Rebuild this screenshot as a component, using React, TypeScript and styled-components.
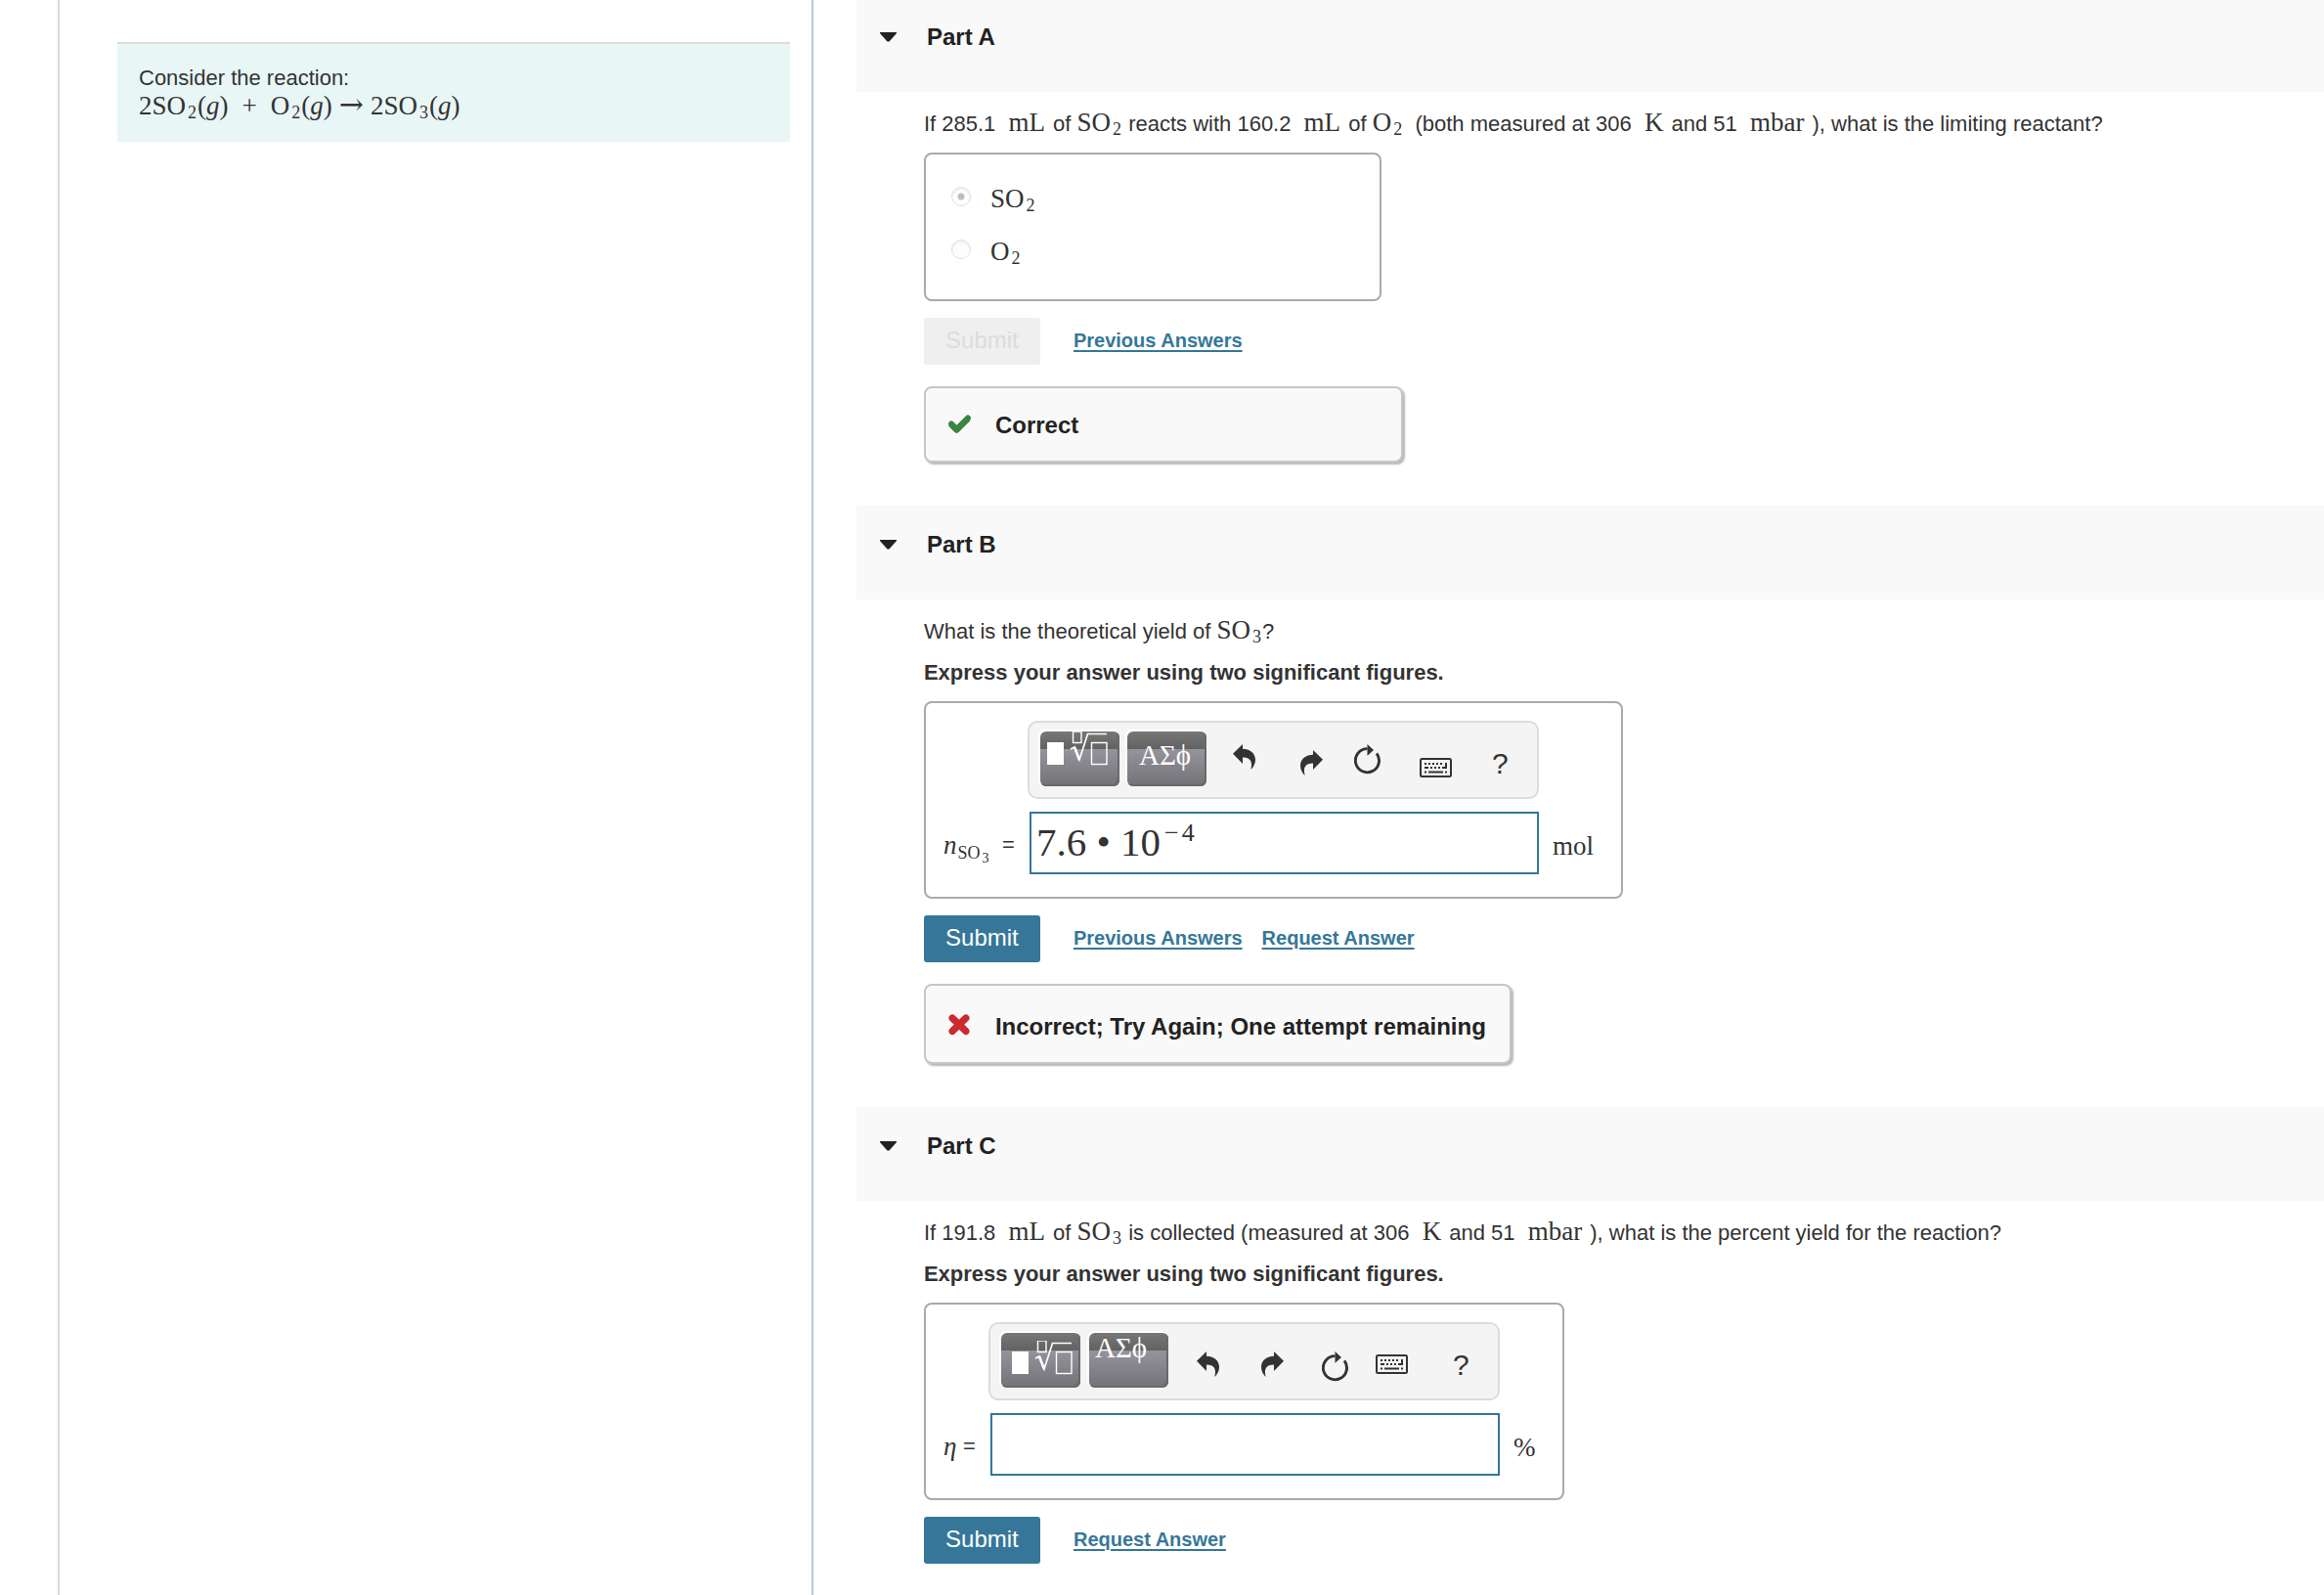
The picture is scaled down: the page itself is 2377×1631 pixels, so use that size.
import React, { useState } from "react";
import styled, { createGlobalStyle } from "styled-components";

const sans = `"Liberation Sans", Arial, Helvetica, sans-serif`;
const serif = `"Liberation Serif", "Times New Roman", Times, serif`;

const GlobalStyle = createGlobalStyle`
  *, *::before, *::after { box-sizing: border-box; }
  body { margin: 0; background: #fff; color: #333; font-family: ${sans}; font-size: 22px; line-height: 30px; }
`;

/* ---------- page frame ---------- */

const Page = styled.div`
  display: grid;
  grid-template-columns: 35% 1fr;
  height: 100vh;
  overflow: hidden;
`;

const Sidebar = styled.aside`
  margin-left: 59px;
  padding: 43px 22px 0 59px;
  border-left: 2px solid #d8d8d8;
  border-right: 2px solid #b8c7da;
`;

const Prompt = styled.section`
  padding: 20px 22px;
  border-top: 2px solid #dcdcdc;
  background: #e8f6f6;
`;

const PromptLine = styled.p`
  margin: 0;
`;

const Main = styled.main`
  min-width: 0;
  margin-top: -2px;
  padding-left: 44px;
`;

/* ---------- a part of the problem ---------- */

const PartSection = styled.section`
  padding-bottom: 44px;
`;

const PartHeader = styled.header`
  height: 96px;
  padding: 26px 24px;
  background: #f9f9f9;
`;

const PartTitle = styled.h2`
  margin: 0;
  font-size: 24px;
  line-height: 28px;
`;

const Toggle = styled.button`
  display: flex;
  align-items: center;
  gap: 31px;
  padding: 0;
  border: 0;
  background: none;
  color: #222;
  font: inherit;
  cursor: pointer;
`;

const Body = styled.form`
  padding: 18px 24px 0 69px;
`;

const Question = styled.p`
  margin: 0;
`;

const Instruction = styled.p`
  margin: 12px 0 0;
  font-weight: bold;
`;

const Formula = styled.span`
  font-family: ${serif};
  font-size: 27px;
  line-height: 0;
`;

const Unit = styled(Formula)`
  margin: 0 2px 0 7px;
`;

const Sub = styled.sub`
  margin: 0 1px 0 2px;
  font-size: 18px;
  line-height: 0;
  vertical-align: -4px;
`;

const Operator = styled.span`
  margin: 0 14px;
`;

const Arrow = styled.span`
  margin: 0 7px;
  font-family: "DejaVu Serif", serif;
  font-size: 30px;
`;

/* ---------- multiple choice ---------- */

const Choices = styled.fieldset`
  display: flex;
  flex-direction: column;
  gap: 24px;
  width: 468px;
  height: 152px;
  margin: 14px 0 0;
  padding: 28px 26px;
  border: 2px solid #aaa;
  border-radius: 8px;
`;

const Choice = styled.label`
  display: flex;
  align-items: center;
  gap: 20px;
`;

const Radio = styled.input`
  appearance: none;
  width: 20px;
  height: 20px;
  margin: 0;
  border: 1px solid #e0e0e0;
  border-radius: 50%;
  background: #fdfdfd;
  box-shadow: inset 0 2px 2px #f0f0f0;

  &:checked {
    background: radial-gradient(circle, #bdbdbd 0 3px, #fdfdfd 4px);
  }
`;

const ChoiceText = styled(Formula)`
  line-height: 30px;
  padding-top: 2px;
  margin-bottom: -2px;
`;

/* ---------- submit row and feedback ---------- */

const Actions = styled.div`
  display: flex;
  align-items: center;
  margin-top: 17px;
`;

const Submit = styled.button`
  height: 48px;
  width: 119px;
  margin-right: 34px;
  padding: 0 0 2px;
  border: 0;
  border-radius: 3px;
  background: #367799;
  color: #fff;
  font: 24px/28px ${sans};

  &:disabled {
    background: #efefef;
    color: #dcdcdc;
  }
`;

const ActionLink = styled.a`
  margin-right: 20px;
  padding-bottom: 2px;
  color: #367799;
  font-size: 20px;
  line-height: 28px;
  font-weight: bold;
  text-underline-offset: 3px;
`;

const Feedback = styled.div<{ $wide?: boolean }>`
  display: flex;
  gap: 24px;
  width: fit-content;
  min-width: 490px;
  margin-top: 22px;
  padding: ${(p) => (p.$wide ? 28 : 24)}px 24px 22px 22px;
  border: 2px solid #c6c6c6;
  border-radius: 8px;
  background: #f9f9f9;
  box-shadow: 2px 2px 2px #b8b8b8;
  color: #222;
  font-size: 24px;
  line-height: 28px;
  font-weight: bold;
`;

/* ---------- equation answer ---------- */

const AnswerBox = styled.div<{ $label: number }>`
  display: grid;
  grid-template-columns: ${(p) => p.$label}px 523px auto;
  row-gap: 13px;
  width: fit-content;
  margin-top: 14px;
  padding: 18px 28px 23px 18px;
  border: 2px solid #aaa;
  border-radius: 8px;
`;

const Toolbar = styled.div<{ $columns: string }>`
  grid-column: 2;
  display: grid;
  grid-template-columns: ${(p) => p.$columns};
  height: 80px;
  padding: 9px 11px;
  border: 2px solid #dcdcdc;
  border-radius: 10px;
  background: #f4f4f4;
`;

const PaletteButton = styled.button<{ $pad: string }>`
  display: flex;
  align-items: flex-start;
  width: 81px;
  height: 56px;
  padding: ${(p) => p.$pad};
  border: 0;
  border-radius: 6px;
  background: linear-gradient(#777 0, #626262 18px, #95939d 18px, #737276 100%);
  box-shadow: inset -2px -2px 0 #696969, -1px -1px 0 1px #fff;
  color: #fff;
  font: 29px/30px ${serif};
  overflow: hidden;
  cursor: pointer;

  svg { flex: none; }
`;

const dropOf = { high: 13, middle: 19, low: 24 };
type Level = keyof typeof dropOf;

const ToolButton = styled.button<{ $level: Level }>`
  justify-self: start;
  align-self: start;
  padding: ${(p) => dropOf[p.$level]}px 0 0;
  border: 0;
  background: none;
  color: #333;
  font: 30px/28px ${sans};
  cursor: pointer;

  svg { display: block; }
`;

const FieldLabel = styled.label`
  grid-column: 1;
  display: flex;
  justify-content: space-between;
  align-items: center;
  padding: 3px 13px 0 0;
`;

const Variable = styled(Formula)`
  font-style: italic;
  line-height: 30px;
`;

const VariableSub = styled.sub`
  margin-left: 1px;
  font-size: 18px;
  font-style: normal;
  line-height: 0;
  vertical-align: -5px;

  sub { margin-left: 2px; font-size: 14px; line-height: 0; vertical-align: -4px; }
`;

const Field = styled.div`
  display: flex;
  align-items: center;
  height: 64px;
  margin-left: 2px;
  padding: 0 5px;
  border: 2px solid #34779b;
  background: #fff;
`;

const FieldMath = styled.span`
  flex: none;
  font-family: ${serif};
  font-size: 41px;
  line-height: 58px;
  padding-bottom: 2px;
`;

const Exponent = styled.sup`
  display: inline-flex;
  gap: 3px;
  margin-left: 4px;
  font-size: 26px;
  line-height: 0;
  vertical-align: 15px;
`;

const FieldInput = styled.input`
  flex: 1;
  min-width: 0;
  border: 0;
  outline: 0;
  padding: 0;
  background: transparent;
  color: #333;
  font: 41px/58px ${serif};
`;

const FieldUnit = styled(Formula)`
  align-self: center;
  padding: 6px 0 0 14px;
  line-height: 30px;
`;

/* ---------- icons ---------- */

const Caret = () => (
  <svg width="17" height="10" viewBox="0 0 17 10" aria-hidden="true">
    <path d="M0 0H17V1L9.500 9.500H7.500L0 1Z" fill="#222" />
  </svg>
);

const CheckIcon = () => (
  <svg width="25" height="24" viewBox="0 0 25 24" aria-hidden="true">
    <path d="M3.500 12.500L9.500 18.500L21 7" fill="none" stroke="#3b8640" strokeWidth="6.500" strokeLinejoin="round" strokeLinecap="butt" />
    <path d="M4 12.500L9.500 18L21 6.500" fill="none" stroke="#3b8640" strokeWidth="6" strokeLinejoin="round" strokeLinecap="round" />
  </svg>
);

const CrossIcon = () => (
  <svg width="25" height="24" viewBox="0 0 25 24" aria-hidden="true">
    <path d="M4.500 4.500L19.500 19M19.500 4.500L4.500 19" fill="none" stroke="#cb2a2e" strokeWidth="7" strokeLinecap="butt" />
    <path d="M5 5L19 18.500M19 5L5 18.500" fill="none" stroke="#cb2a2e" strokeWidth="7" strokeLinecap="round" />
  </svg>
);

const UndoIcon = () => (
  <svg width="24" height="27" viewBox="0 0 24 27" aria-hidden="true">
    <path d="M0 9.700L10 0V4.700C17 5 23 8.500 23 16C23 20 21 23.500 18.300 26C20.500 18 18 13.600 10 13.600V20Z" fill="#333" />
  </svg>
);

const RedoIcon = () => (
  <svg width="24" height="27" viewBox="0 0 24 27" aria-hidden="true">
    <path d="M23 9.700L13 0V4.700C6 5 0 8.500 0 16C0 20 2 23.500 4.700 26C2.500 18 5 13.600 13 13.600V20Z" fill="#333" />
  </svg>
);

const ResetIcon = () => (
  <svg width="28" height="31" viewBox="0 0 28 31" aria-hidden="true">
    <path d="M23 9.300A12.100 12.100 0 1 1 13.500 4.600" fill="none" stroke="#333" strokeWidth="2.900" />
    <path d="M13.500 0L20 5.900L13.500 11.700Z" fill="#333" />
  </svg>
);

const KeyboardIcon = () => (
  <svg width="33" height="23" viewBox="0 -3 33 23" aria-hidden="true">
    <rect x="1" y="1" width="31" height="18" rx="1.500" fill="none" stroke="#333" strokeWidth="2" />
    <path d="M5 6H24" stroke="#333" strokeWidth="2" strokeDasharray="2 2" />
    <path d="M5 10H9M11 10H13M15 10H17M19 10H21M23 10H28M27 5V11" stroke="#333" strokeWidth="2" />
    <path d="M5 14.500H7M9 14.500H24M26 14.500H28" stroke="#333" strokeWidth="2" />
  </svg>
);

const TemplateIcon = () => (
  <svg width="63" height="35" viewBox="0 1 63 35" aria-hidden="true">
    <rect x="0" y="12" width="17" height="23" fill="#fff" />
    <g fill="none" stroke="#fff">
      <rect x="26.500" y="1" width="8.500" height="11.500" strokeWidth="1.400" />
      <path d="M24 19L28 17L33 30L41.500 3.500H61" strokeWidth="1.700" />
      <path d="M28 17L33 30" strokeWidth="2.600" />
      <rect x="45.500" y="12.500" width="15.500" height="22" strokeWidth="1.400" />
    </g>
  </svg>
);

/* ---------- composed pieces ---------- */

function Compound({ base, count }: { base: string; count: number }) {
  return (
    <Formula>
      {base}
      <Sub>{count}</Sub>
    </Formula>
  );
}

function Part({ name, children }: { name: string; children: React.ReactNode }) {
  const [open, setOpen] = useState(true);
  return (
    <PartSection>
      <PartHeader>
        <PartTitle>
          <Toggle type="button" aria-expanded={open} onClick={() => setOpen(!open)}>
            <Caret />
            {name}
          </Toggle>
        </PartTitle>
      </PartHeader>
      {open && <Body onSubmit={(e) => e.preventDefault()}>{children}</Body>}
    </PartSection>
  );
}

type EditorProps = {
  id: string;
  variable: React.ReactNode;
  unit: string;
  labelWidth: number;
  columns: string;
  palettePads: [string, string];
  levels: Level[];
  math?: React.ReactNode;
};

const tools = [
  { name: "Undo", glyph: <UndoIcon /> },
  { name: "Redo", glyph: <RedoIcon /> },
  { name: "Reset", glyph: <ResetIcon /> },
  { name: "Keyboard shortcuts", glyph: <KeyboardIcon /> },
  { name: "Help", glyph: "?" },
];

function EquationEditor({ id, variable, unit, labelWidth, columns, palettePads, levels, math }: EditorProps) {
  return (
    <AnswerBox $label={labelWidth}>
      <Toolbar $columns={columns} role="toolbar" aria-label="Equation tools">
        <PaletteButton type="button" $pad={palettePads[0]} aria-label="Templates">
          <TemplateIcon />
        </PaletteButton>
        <PaletteButton type="button" $pad={palettePads[1]}>ΑΣϕ</PaletteButton>
        {tools.map((tool, i) => (
          <ToolButton key={tool.name} type="button" $level={levels[i]} aria-label={tool.name}>
            {tool.glyph}
          </ToolButton>
        ))}
      </Toolbar>
      <FieldLabel htmlFor={id}>
        {variable}
        <span>=</span>
      </FieldLabel>
      <Field>
        {math && <FieldMath>{math}</FieldMath>}
        <FieldInput id={id} type="text" autoComplete="off" />
      </Field>
      <FieldUnit>{unit}</FieldUnit>
    </AnswerBox>
  );
}

export default function App() {
  return (
    <>
      <GlobalStyle />
      <Page>
        <Sidebar>
          <Prompt>
            <PromptLine>Consider the reaction:</PromptLine>
            <PromptLine>
              <Formula>
                2SO<Sub>2</Sub>(<i>g</i>)<Operator>+</Operator>O<Sub>2</Sub>(<i>g</i>)
                <Arrow>→</Arrow>2SO<Sub>3</Sub>(<i>g</i>)
              </Formula>
            </PromptLine>
          </Prompt>
        </Sidebar>

        <Main>
          <Part name="Part A">
            <Question>
              If 285.1 <Unit>mL</Unit> of <Compound base="SO" count={2} /> reacts with 160.2 <Unit>mL</Unit> of{" "}
              <Compound base="O" count={2} />
              {"\u00a0 "}
              (both measured at 306 <Unit>K</Unit> and 51 <Unit>mbar</Unit> ), what is the limiting reactant?
            </Question>
            <Choices aria-label="Limiting reactant">
              <Choice>
                <Radio type="radio" name="reactant" defaultChecked disabled />
                <ChoiceText>SO<Sub>2</Sub></ChoiceText>
              </Choice>
              <Choice>
                <Radio type="radio" name="reactant" disabled />
                <ChoiceText>O<Sub>2</Sub></ChoiceText>
              </Choice>
            </Choices>
            <Actions>
              <Submit type="submit" disabled>Submit</Submit>
              <ActionLink href="#previous-a">Previous Answers</ActionLink>
            </Actions>
            <Feedback role="status">
              <CheckIcon />
              Correct
            </Feedback>
          </Part>

          <Part name="Part B">
            <Question>
              What is the theoretical yield of <Compound base="SO" count={3} />?
            </Question>
            <Instruction>Express your answer using two significant figures.</Instruction>
            <EquationEditor
              id="amount"
              variable={<Variable>n<VariableSub>SO<sub>3</sub></VariableSub></Variable>}
              unit="mol"
              labelWidth={86}
              columns="89px 108px 69px 55px 67px 74px 1fr"
              palettePads={["0 0 0 7px", "9px 0 0 12px"]}
              levels={["high", "middle", "high", "low", "middle"]}
              math={<>7.6 • 10<Exponent><span>−</span><span>4</span></Exponent></>}
            />
            <Actions>
              <Submit type="submit">Submit</Submit>
              <ActionLink href="#previous-b">Previous Answers</ActionLink>
              <ActionLink href="#request-b">Request Answer</ActionLink>
            </Actions>
            <Feedback role="status" $wide>
              <CrossIcon />
              Incorrect; Try Again; One attempt remaining
            </Feedback>
          </Part>

          <Part name="Part C">
            <Question>
              If 191.8 <Unit>mL</Unit> of <Compound base="SO" count={3} /> is collected (measured at 306{" "}
              <Unit>K</Unit> and 51 <Unit>mbar</Unit> ), what is the percent yield for the reaction?
            </Question>
            <Instruction>Express your answer using two significant figures.</Instruction>
            <EquationEditor
              id="yield"
              variable={<Variable>η</Variable>}
              unit="%"
              labelWidth={46}
              columns="90px 110px 66px 62px 55px 79px 1fr"
              palettePads={["8px 0 0 11px", "0 0 0 6px"]}
              levels={["middle", "middle", "middle", "middle", "middle"]}
            />
            <Actions>
              <Submit type="submit">Submit</Submit>
              <ActionLink href="#request-c">Request Answer</ActionLink>
            </Actions>
          </Part>
        </Main>
      </Page>
    </>
  );
}
